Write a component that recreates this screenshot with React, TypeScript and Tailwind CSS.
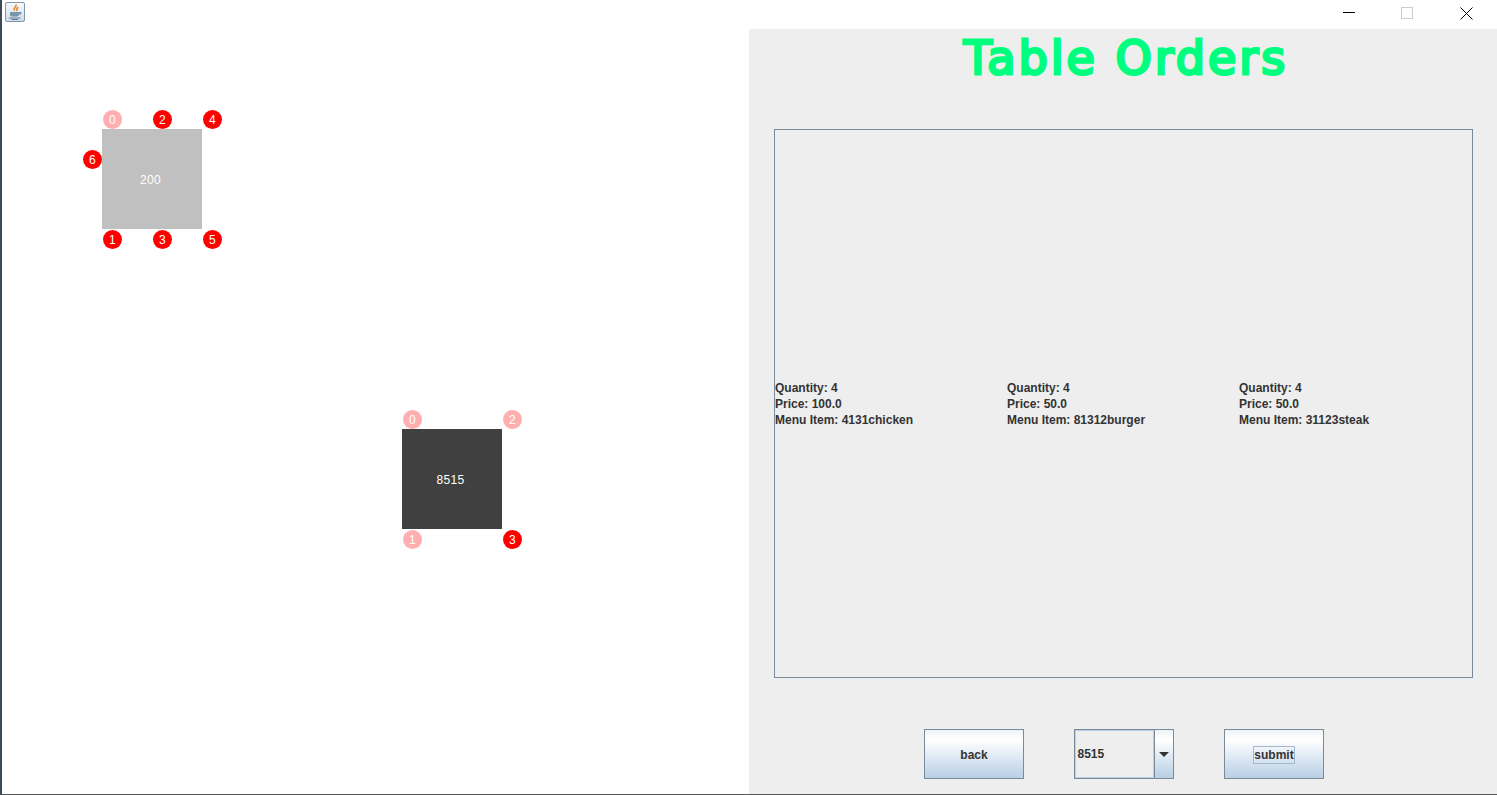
const orders = [
  { quantity: 4, price: "100.0", item: "4131chicken" },
  { quantity: 4, price: "50.0", item: "81312burger" },
  { quantity: 4, price: "50.0", item: "31123steak" },
];

type Seat = { label: number; x: number; y: number; taken: boolean };

// seat positions are relative to the table's top left corner
const tables: { id: string; x: number; y: number; bg: string; seats: Seat[] }[] = [
  {
    id: "200",
    x: 102,
    y: 100,
    bg: "bg-[#c0c0c0]",
    seats: [
      { label: 0, x: 1, y: -19, taken: false },
      { label: 1, x: 1, y: 101, taken: true },
      { label: 2, x: 51, y: -19, taken: true },
      { label: 3, x: 51, y: 101, taken: true },
      { label: 4, x: 101, y: -19, taken: true },
      { label: 5, x: 101, y: 101, taken: true },
      { label: 6, x: -19, y: 21, taken: true },
    ],
  },
  {
    id: "8515",
    x: 402,
    y: 400,
    bg: "bg-[#404040]",
    seats: [
      { label: 0, x: 1, y: -19, taken: false },
      { label: 1, x: 1, y: 101, taken: false },
      { label: 2, x: 101, y: -19, taken: false },
      { label: 3, x: 101, y: 101, taken: true },
    ],
  },
];

function JavaIcon() {
  return (
    <div className="flex h-5 w-5 items-center justify-center rounded-[2px] border border-[#7f98ab] bg-gradient-to-b from-[#f8fafc] to-[#cfdbe7]">
      <svg width="18" height="18" viewBox="0 0 18 18" fill="none">
        <path d="M10 1.5c1 2-3 3-1.5 6M12 4c-1 1.200-2 2-1 4" stroke="#e8862a" strokeWidth="1.600" />
        <path d="M4 9h9v2.500c0 1.200-1 2-2.200 2H6.200c-1.200 0-2.200-.8-2.200-2z" fill="#7b95ab" />
        <path d="M13 9.500h1.800v1.500H13M3 15h11.500M5.500 16.500h6.500" stroke="#5f7d95" strokeWidth="1" />
      </svg>
    </div>
  );
}

function TitleBar() {
  return (
    <div className="flex h-[29px] items-center justify-between bg-white">
      <div className="mb-[5px] ml-[3px]">
        <JavaIcon />
      </div>
      <div className="flex h-full items-start">
        <div className="flex h-full w-[46px] justify-center pt-[12px] pr-[10px]">
          <div className="h-px w-3 bg-black" />
        </div>
        <div className="flex h-full w-[60px] justify-center pt-[7px]">
          <div className="h-3 w-3 border border-[#cccccc]" />
        </div>
        <div className="flex h-full w-[60px] justify-center pt-[7px] pr-[1px]">
          <svg width="13" height="13" viewBox="0 0 13 13" fill="none" stroke="#000000" strokeWidth="1">
            <path d="M.5.5l12 12M12.5.5l-12 12" />
          </svg>
        </div>
      </div>
    </div>
  );
}

function FloorPlan() {
  return (
    <div className="relative w-[749px] shrink-0 bg-white">
      {tables.map((table) => (
        <div
          key={table.id}
          className={`absolute flex h-[100px] w-[100px] items-center justify-center text-[12px] tracking-[0.3px] text-white ${table.bg}`}
          style={{ left: table.x, top: table.y }}
        >
          <span className="pt-[2px] pr-[3px]">{table.id}</span>
          {table.seats.map((seat) => (
            <div
              key={seat.label}
              className={`absolute flex h-[19px] w-[19px] items-center justify-center rounded-full text-[12px] text-white ${
                seat.taken ? "bg-[#ff0000]" : "bg-[#ffafaf]"
              }`}
              style={{ left: seat.x, top: seat.y }}
            >
              {seat.label}
            </div>
          ))}
        </div>
      ))}
    </div>
  );
}

function JavaButton({ label, focused }: { label: string; focused?: boolean }) {
  return (
    <button className="flex h-[50px] w-[100px] items-center justify-center border border-[#7a8a99] bg-gradient-to-b from-[#eef3f8] via-[#ffffff] via-[20%] to-[#b8cfe5] pt-[2px] pl-[1px] text-[12px] font-bold text-[#333333]">
      <span className={focused ? "flex h-[18px] items-center border border-[#a3b8cc]" : ""}>{label}</span>
    </button>
  );
}

function OrdersPanel() {
  return (
    <div className="flex flex-1 flex-col bg-[#eeeeee] pl-[25px] pr-6">
      <h1 className="flex h-[59px] items-center justify-center pl-[5px] font-['Comic_Sans_MS','DejaVu_Sans',sans-serif] text-[46px] font-normal tracking-[3px] text-[#00ff7f] [-webkit-text-stroke:3px_#00ff7f]">
        Table Orders
      </h1>
      <div className="mt-[41px] grid h-[549px] grid-cols-[232px_232px_232px] items-center border border-[#7a8a99]">
        {orders.map((order) => (
          <div key={order.item} className="text-[12px] leading-4 font-bold text-[#333333]">
            <div>Quantity: {order.quantity}</div>
            <div>Price: {order.price}</div>
            <div>Menu Item: {order.item}</div>
          </div>
        ))}
      </div>
      <div className="mt-[51px] flex justify-center gap-[50px]">
        <JavaButton label="back" />
        <div className="flex h-[50px] w-[100px] border border-[#7a8a99]">
          <div className="flex flex-1 items-center border border-[#b8cfe5] bg-[#eeeeee] pl-[2px] text-[12px] font-bold text-[#333333]">
            8515
          </div>
          <div className="flex w-[19px] items-center justify-center border-l border-[#7a8a99] bg-gradient-to-b from-[#eef3f8] via-[#ffffff] via-[20%] to-[#b8cfe5]">
            <div className="h-0 w-0 border-x-[5px] border-t-[5px] border-x-transparent border-t-[#333333]" />
          </div>
        </div>
        <JavaButton label="submit" focused />
      </div>
    </div>
  );
}

export default function App() {
  return (
    <div className="flex h-[795px] w-[1497px] flex-col overflow-hidden border-b border-l-2 border-b-[#555555] border-l-[#3c4a55] bg-white font-['Liberation_Sans',Arial,sans-serif]">
      <TitleBar />
      <div className="flex flex-1 -ml-[2px]">
        <FloorPlan />
        <OrdersPanel />
      </div>
    </div>
  );
}
